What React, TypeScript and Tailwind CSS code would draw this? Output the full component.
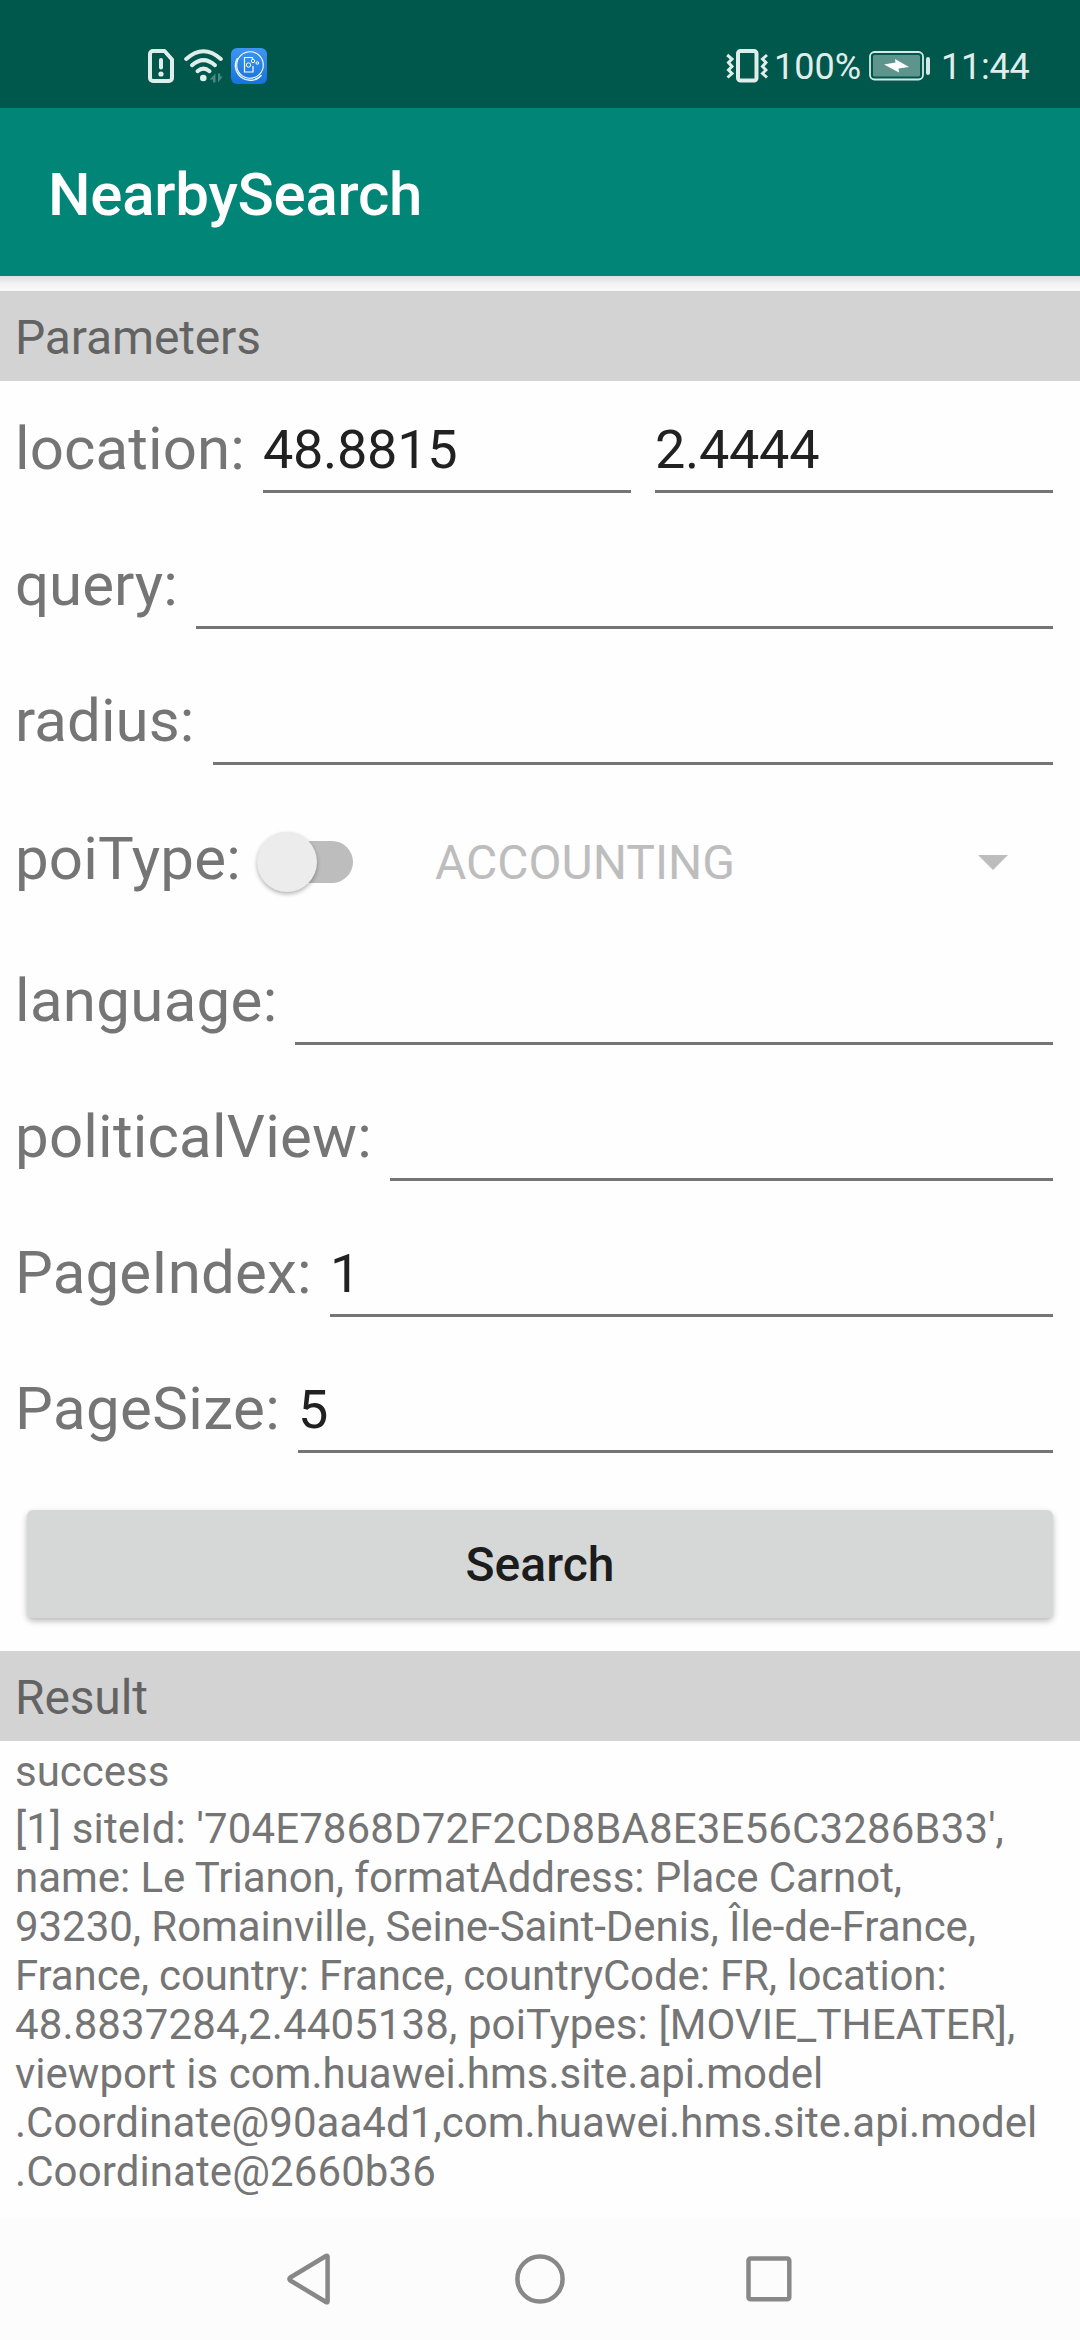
import React from "react";

function SimAlertIcon() {
  return (
    <svg width="26" height="34" viewBox="0 0 26 34" fill="none" stroke="#e0eeeb" strokeWidth="4">
      <path d="M5 2h11.5L24 10.500V29a3 3 0 0 1-3 3H5a3 3 0 0 1-3-3V5a3 3 0 0 1 3-3z" strokeLinejoin="round" />
      <path d="M13 11v7.500" strokeLinecap="round" />
      <circle cx="13" cy="25" r="2.600" fill="#e0eeeb" stroke="none" />
    </svg>
  );
}

function WifiIcon() {
  return (
    <svg width="40" height="34" viewBox="0 0 40 34" fill="none" stroke="#e0eeeb" strokeWidth="4" strokeLinecap="round">
      <path d="M2.200 10Q19.500-5.500 36.800 10" />
      <path d="M8 16.200Q19.500 6 31 16.200" />
      <path d="M13.500 22.200Q19.500 17 25.500 22.200" />
      <circle cx="19.300" cy="29" r="3.300" fill="#e0eeeb" stroke="none" />
      <path d="M31.500 24.500v9h-2.500v-3h-3.500zM34 24.500v9l4.800-6h-2.600v-3z" fill="#488a80" stroke="none" />
    </svg>
  );
}

function AssistantIcon() {
  return (
    <svg width="36" height="36" viewBox="0 0 36 36" fill="none">
      <defs>
        <linearGradient id="tile" x1="0" y1="0" x2="0" y2="1">
          <stop offset="0" stopColor="#3f95f0" />
          <stop offset="1" stopColor="#1673dc" />
        </linearGradient>
      </defs>
      <rect width="36" height="36" rx="6" fill="url(#tile)" />
      <circle cx="19" cy="17" r="13.300" stroke="#fff" strokeWidth="1.100" />
      <path d="M6.500 10C2.500 17 4.500 25 10.500 29.500c6 4.500 15.500 3.500 20-2.500" stroke="#e6f2ff" strokeWidth="1.500" />
      <path d="M21.500 11V9.500h-8v14.500h8.500V18" stroke="#fff" strokeWidth="1.200" />
      <circle cx="17.500" cy="17" r="2.200" stroke="#fff" />
      <circle cx="22" cy="13" r="1.700" stroke="#fff" />
      <circle cx="26.300" cy="15" r="1.300" stroke="#fff" />
    </svg>
  );
}

function VibrateIcon() {
  return (
    <svg width="42" height="34" viewBox="0 0 42 34" fill="none" stroke="#e0eeeb">
      <rect x="12" y="2" width="18.500" height="29.500" rx="2.500" strokeWidth="4" />
      <path d="M1.200 6L6 10 2.500 13.500 6 17.500 2.500 21 6 24.500 1.500 28.500" strokeWidth="3" />
      <path d="M41 6L36.500 10 40 13.500 36.500 17.500 40 21 36.500 24.500 41 28.500" strokeWidth="3" />
    </svg>
  );
}

function BatteryIcon() {
  return (
    <svg width="62" height="30" viewBox="0 0 62 30" fill="none">
      <rect x="1" y="1" width="53" height="27.500" rx="4.500" stroke="#d5e8e5" strokeWidth="1.800" />
      <rect x="4" y="4" width="47" height="21.500" rx="1.500" fill="#5d958d" />
      <path d="M15 13.500L26.500 11.500 26 8 40 16 29.500 17.500 30 21.500z" fill="#fff" />
      <rect x="57" y="6" width="4" height="18" rx="2" fill="#d5e8e5" />
    </svg>
  );
}

function StatusBar() {
  return (
    <div className="flex h-[108px] items-center bg-[#00574b] pt-[24px] pl-[148px] pr-[48px] text-[36px] leading-[42px] text-[#e0eeeb]">
      <SimAlertIcon />
      <div className="ml-[10px]"><WifiIcon /></div>
      <div className="ml-[7px]"><AssistantIcon /></div>
      <div className="ml-auto"><VibrateIcon /></div>
      <span className="mt-[2px] ml-[6px] w-[87px]">100%</span>
      <div className="ml-[8px]"><BatteryIcon /></div>
      <span className="mt-[2px] ml-[10px] w-[91px] tracking-[-0.2px]">11:44</span>
    </div>
  );
}

function SectionHeader({ title }: { title: string }) {
  return (
    <div className="h-[90px] bg-[#d3d3d3] pt-[19px] pl-[15px] text-[48px] leading-[56px] tracking-[-0.15px] text-[#636363]">{title}</div>
  );
}

function Label({ text, width }: { text: string; width: string }) {
  return (
    <span className={`mb-[9px] shrink-0 text-[60px] leading-[70px] whitespace-nowrap text-[#757575] ${width}`}>{text}</span>
  );
}

function Field({ value = "", size = "flex-1" }: { value?: string; size?: string }) {
  return (
    <div className={`h-[75px] border-b-[3px] border-[#757575] text-[54px] leading-[64px] tracking-[-0.3px] text-[#212121] ${size}`}>{value}</div>
  );
}

function Row({ label, width, value }: { label: string; width: string; value?: string }) {
  return (
    <div className="flex h-[136px] items-end pr-[27px] pl-[15px]">
      <Label text={label} width={width} />
      <Field value={value} />
    </div>
  );
}

function PoiTypeRow() {
  return (
    <div className="flex h-[144px] items-end pr-[72px] pl-[15px]">
      <span className="mb-[15px] w-[242px] text-[60px] leading-[70px] tracking-[0.15px] text-[#757575]">poiType:</span>
      <div className="mb-[17px] flex h-[60px] w-[96px] items-center">
        <div className="z-10 h-[60px] w-[60px] shrink-0 rounded-full bg-[#ececec] shadow-[0_2px_4px_rgba(0,0,0,0.3)]" />
        <div className="-ml-[39px] h-[42px] w-[75px] rounded-full bg-[#bdbdbd]" />
      </div>
      <span className="mb-[18px] ml-[82px] text-[48px] leading-[56px] text-[#bdbdbd]">ACCOUNTING</span>
      <svg className="mb-[39px] ml-auto" width="30" height="15" viewBox="0 0 30 15">
        <path d="M0 0h30L15 15z" fill="#bdbdbd" />
      </svg>
    </div>
  );
}

const resultLines = [
  { text: "[1] siteId: '704E7868D72F2CD8BA8E3E56C3286B33',", tracking: "tracking-[0.13px]" },
  { text: "name: Le Trianon, formatAddress: Place Carnot,", tracking: "tracking-[-0.04px]" },
  { text: "93230, Romainville, Seine-Saint-Denis, Île-de-France,", tracking: "tracking-[-0.055px]" },
  { text: "France, country: France, countryCode: FR, location:", tracking: "tracking-[-0.12px]" },
  { text: "48.8837284,2.4405138, poiTypes: [MOVIE_THEATER],", tracking: "tracking-[0.115px]" },
  { text: "viewport is com.huawei.hms.site.api.model", tracking: "tracking-normal" },
  { text: ".Coordinate@90aa4d1,com.huawei.hms.site.api.model", tracking: "tracking-[0.04px]" },
  { text: ".Coordinate@2660b36", tracking: "tracking-[0.1px]" },
];

function NavBar() {
  return (
    <div className="flex h-[122px] items-center justify-between bg-[#fcfcfc] px-[285px]">
      <svg width="50" height="54" viewBox="0 0 50 54" fill="none" stroke="#888" strokeWidth="4.500" strokeLinejoin="round">
        <path d="M42.600 4.800V49.300Q42.600 51 41 50L5.300 28.500Q3.500 27 5.300 25.500L41 4Q42.600 3 42.600 4.800z" />
      </svg>
      <svg width="54" height="54" viewBox="0 0 54 54" fill="none" stroke="#888" strokeWidth="4.500">
        <circle cx="27" cy="27" r="22.600" />
      </svg>
      <svg width="50" height="54" viewBox="0 0 50 54" fill="none" stroke="#888" strokeWidth="4.500">
        <rect x="3.500" y="6.500" width="40.800" height="40.800" rx="2" />
      </svg>
    </div>
  );
}

export default function App() {
  return (
    <div className="flex h-[2340px] w-[1080px] flex-col overflow-hidden bg-[#fefefe] font-['Roboto',sans-serif]">
      <StatusBar />
      <div className="h-[168px] bg-[#008577] pt-[52px] pl-[48px] text-[60px] leading-[70px] font-medium tracking-[-0.25px] text-white">
        NearbySearch
      </div>
      <div className="h-[15px] bg-linear-to-b from-[#dedede] via-[#f2f2f2] to-[#fafafa]" />
      <SectionHeader title="Parameters" />
      <div className="flex h-[112px] items-end pr-[27px] pl-[15px]">
        <Label text="location:" width="w-[248px] tracking-[0.1px]" />
        <Field value="48.8815" size="w-[368px]" />
        <div className="w-[24px]" />
        <Field value="2.4444" />
      </div>
      <Row label="query:" width="w-[181px]" />
      <Row label="radius:" width="w-[198px] tracking-[0.1px]" />
      <PoiTypeRow />
      <Row label="language:" width="w-[280px] tracking-[0.3px]" />
      <Row label="politicalView:" width="w-[375px] tracking-[0.2px]" />
      <Row label="PageIndex:" width="w-[315px] tracking-[0.15px]" value="1" />
      <Row label="PageSize:" width="w-[283px] tracking-[0.4px]" value="5" />
      <button className="mx-[27px] mt-[57px] mb-[33px] h-[108px] shrink-0 rounded-[6px] bg-[#d6d7d7] pt-[2px] text-[48px] leading-[56px] font-medium text-[#1c1c1c] shadow-[0_3px_6px_rgba(0,0,0,0.28)]">
        Search
      </button>
      <SectionHeader title="Result" />
      <div className="flex-1 pt-[6px] pl-[15px] text-[42px] leading-[49px] text-[#757575]">
        <div className="mb-[8px]">success</div>
        {resultLines.map((line) => (
          <div key={line.text} className={`whitespace-nowrap ${line.tracking}`}>{line.text}</div>
        ))}
      </div>
      <NavBar />
    </div>
  );
}
